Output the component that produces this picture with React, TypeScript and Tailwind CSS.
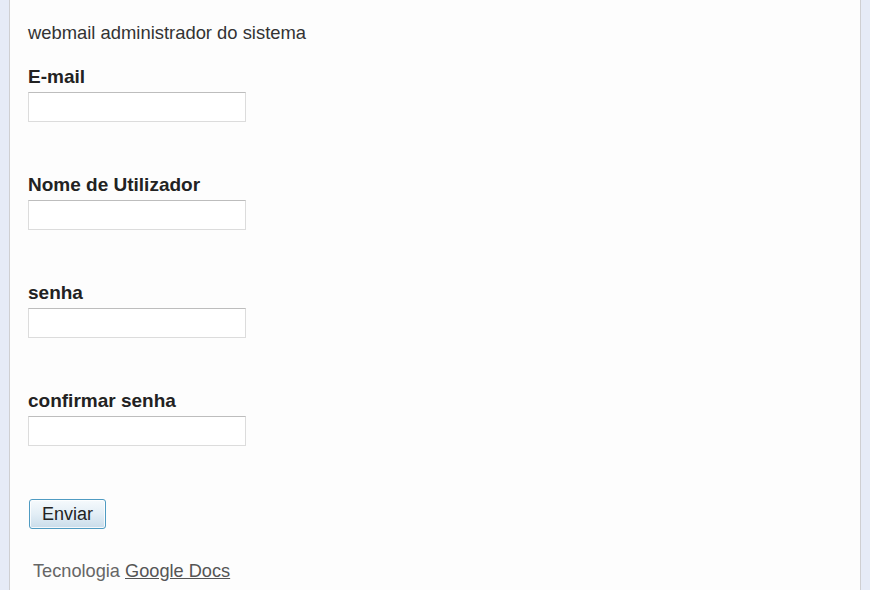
import React from "react";

const fields = ["E-mail", "Nome de Utilizador", "senha", "confirmar senha"];

export default function App() {
  return (
    <div
      className="w-[870px] h-[590px] bg-[#e6ebf7] flex overflow-hidden"
      style={{ fontFamily: '"Liberation Sans", Arial, sans-serif' }}
    >
      <div className="ml-[9px] w-[852px] h-full bg-[#fdfdfd] border-x border-[#cfcfd2] pt-[22px] pl-[18px]">
        <p className="text-[18.4px] leading-[22px] text-[#333] mb-[22px]">webmail administrador do sistema</p>
        {fields.map((f) => (
          <div key={f} className="mb-[52px]">
            <div className="text-[19px] leading-[22px] font-bold text-[#222] mb-[4px]">{f}</div>
            <input
              type="text"
              className="block w-[218px] h-[30px] bg-white border border-[#dcdcdc] border-t-[#bdbdbd] outline-none"
            />
          </div>
        ))}
        <button
          type="button"
          className="ml-[1px] mt-[1px] w-[77px] h-[30px] rounded-[3px] border border-[#4f9bc2] bg-gradient-to-b from-[#f6fafd] via-[#e3eef6] to-[#c9dcea] text-[18px] leading-[22px] text-[#222] shadow-[inset_0_0_0_1px_rgba(255,255,255,0.8)]"
        >
          Enviar
        </button>
        <div className="mt-[31px] pl-[5px] text-[18.2px] leading-[22px] text-[#666]">
          Tecnologia <a className="underline text-[#555]">Google Docs</a>
        </div>
      </div>
    </div>
  );
}
